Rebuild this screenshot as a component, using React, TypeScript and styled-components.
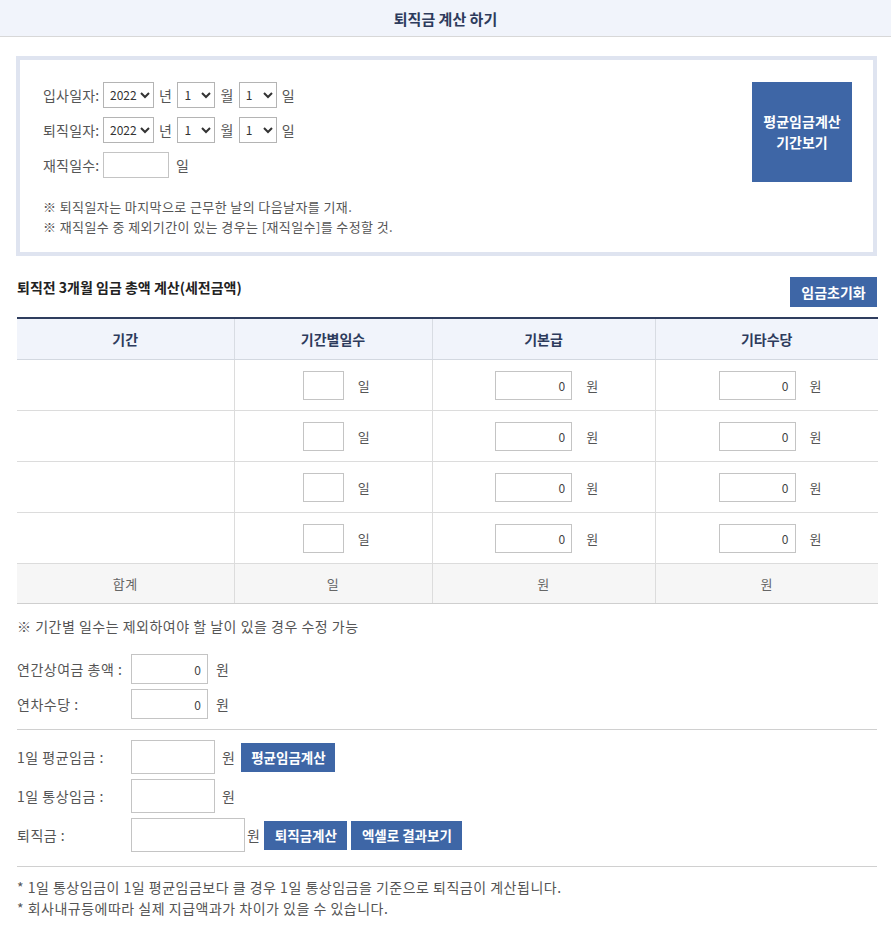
import React from "react";
import styled, { createGlobalStyle } from "styled-components";

const GlobalStyle = createGlobalStyle`
  html, body {
    margin: 0;
    padding: 0;
    background: #fff;
  }
  body {
    font-family: "Noto Sans CJK KR", "Noto Sans", sans-serif;
    font-size: 14px;
    letter-spacing: 0.5px;
    color: #555;
  }
`;

const Header = styled.header`
  height: 36px;
  background: #f1f4fb;
  border-bottom: 1px solid #d8d8d8;
  display: flex;
  align-items: center;
  justify-content: center;
  font-size: 15px;
  font-weight: 700;
  letter-spacing: 0;
  color: #2d3b5c;
`;

const Content = styled.div`
  padding: 19px 14px 0 16px;
`;

const InfoBox = styled.div`
  border: 4px solid #dfe4f0;
  padding: 17px 21px 14px 23px;
  display: flex;
  justify-content: space-between;
  align-items: flex-start;
  height: 200px;
  box-sizing: border-box;
`;

const DateRows = styled.div`
  display: flex;
  flex-direction: column;
`;

const Row = styled.div<{ $gap?: number; $h?: number }>`
  display: flex;
  flex-shrink: 0;
  align-items: center;
  gap: ${(p) => p.$gap ?? 5}px;
  height: ${(p) => p.$h ?? 35}px;
`;

const Label = styled.span<{ $w?: number }>`
  width: ${(p) => (p.$w ? `${p.$w}px` : "auto")};
  flex-shrink: 0;
  color: #555;
  white-space: nowrap;
`;

const DateLabel = styled(Label)`
  letter-spacing: 0.2px;
`;

const Select = styled.select<{ $w: number }>`
  width: ${(p) => p.$w}px;
  height: 26px;
  border: 1px solid #b4b4b4;
  border-radius: 0;
  background: #fff;
  font-family: "Noto Sans CJK KR", "Noto Sans", sans-serif;
  font-size: 12px;
  color: #333;
  padding: 0 0 0 2px;
`;

const TextInput = styled.input<{ $w: number; $h: number }>`
  width: ${(p) => p.$w}px;
  height: ${(p) => p.$h}px;
  box-sizing: border-box;
  flex-shrink: 0;
  border: 1px solid #c4c4c4;
  text-align: right;
  padding: 0 6px;
  font-family: "Noto Sans CJK KR", "Noto Sans", sans-serif;
  font-size: 12px;
  color: #444;
  outline: none;
`;

const Notes = styled.div`
  margin-top: 15px;
  font-size: 13px;
  letter-spacing: 0.4px;
  line-height: 20px;
  color: #555;
`;

const BlueButton = styled.button<{ $w?: number; $h?: number; $fs?: number }>`
  width: ${(p) => (p.$w ? `${p.$w}px` : "auto")};
  height: ${(p) => p.$h ?? 29}px;
  background: #3e66a6;
  color: #fff;
  border: 0;
  padding: 0 6px;
  font-family: "Noto Sans CJK KR", "Noto Sans", sans-serif;
  font-size: ${(p) => p.$fs ?? 13.5}px;
  font-weight: 700;
  letter-spacing: 0;
  line-height: 21px;
  cursor: pointer;
  flex-shrink: 0;
`;

const PeriodButton = styled(BlueButton)`
  margin-top: 5px;
`;

const SectionHead = styled.div`
  margin: 21px 0 10px 1px;
  display: flex;
  justify-content: space-between;
  align-items: center;
`;

const SectionTitle = styled.h2`
  margin: 0;
  font-size: 14px;
  font-weight: 700;
  letter-spacing: 0;
  color: #222;
  position: relative;
  top: -5px;
`;

const Table = styled.table`
  width: 861px;
  margin-left: 1px;
  border-collapse: collapse;
  border-top: 2px solid #2f3d5e;
  table-layout: fixed;
`;

const Th = styled.th`
  height: 40px;
  padding: 0;
  background: #f1f4fb;
  color: #2d3b5c;
  font-size: 14px;
  font-weight: 700;
  letter-spacing: 0;
  border-bottom: 1px solid #d3d8e0;
  border-left: 1px solid #d8dce3;
  &:first-child {
    border-left: 0;
  }
`;

const Td = styled.td`
  height: 50px;
  padding: 0;
  border-bottom: 1px solid #dcdcdc;
  border-left: 1px solid #dcdcdc;
  text-align: center;
  vertical-align: middle;
  &:first-child {
    border-left: 0;
  }
`;

const SumTd = styled.td`
  height: 39px;
  padding: 0;
  background: #f6f6f6;
  border-top: 1px solid #2f3d5e;
  border-bottom: 1px solid #cfcfcf;
  border-left: 1px solid #dcdcdc;
  text-align: center;
  color: #666;
  font-size: 13px;
  &:first-child {
    border-left: 0;
  }
`;

const Cell = styled.div`
  display: flex;
  justify-content: center;
  align-items: center;
  gap: 14px;
  padding-left: 7px;
  font-size: 13px;
`;

const TableNote = styled.p`
  margin: 12px 0 18px 1px;
  color: #555;
`;

const FormBlock = styled.div`
  padding-left: 1px;
  display: flex;
  flex-direction: column;
  gap: 5px;
`;

const Divider = styled.hr<{ $top?: number }>`
  margin: ${(p) => p.$top ?? 10}px 0 10px 1px;
  border: 0;
  border-top: 1px solid #d0d0d0;
`;

const Unit = styled.span<{ $ml: number }>`
  margin-left: ${(p) => p.$ml}px;
  color: #555;
  flex-shrink: 0;
`;

const Footer = styled.div`
  margin: 10px 0 0 1px;
  line-height: 21px;
  color: #555;
`;

const years = ["2022"];
const nums = Array.from({ length: 12 }, (_, i) => String(i + 1));
const days = Array.from({ length: 31 }, (_, i) => String(i + 1));

const DateRow: React.FC<{ label: string }> = ({ label }) => (
  <Row>
    <DateLabel $w={55}>{label}</DateLabel>
    <Select $w={51} defaultValue="2022">
      {years.map((y) => (
        <option key={y}>{y}</option>
      ))}
    </Select>
    <Label>년</Label>
    <Select $w={38} defaultValue="1">
      {nums.map((m) => (
        <option key={m}>{m}</option>
      ))}
    </Select>
    <Label>월</Label>
    <Select $w={38} defaultValue="1">
      {days.map((d) => (
        <option key={d}>{d}</option>
      ))}
    </Select>
    <Label>일</Label>
  </Row>
);

export default function App() {
  const rows = [0, 1, 2, 3];
  return (
    <>
      <GlobalStyle />
      <Header>퇴직금 계산 하기</Header>
      <Content>
        <InfoBox>
          <DateRows>
            <DateRow label="입사일자:" />
            <DateRow label="퇴직일자:" />
            <Row>
              <DateLabel $w={55}>재직일수:</DateLabel>
              <TextInput $w={66} $h={26} />
              <Label style={{ marginLeft: 2 }}>일</Label>
            </Row>
            <Notes>
              ※ 퇴직일자는 마지막으로 근무한 날의 다음날자를 기재.
              <br />※ 재직일수 중 제외기간이 있는 경우는 [재직일수]를 수정할 것.
            </Notes>
          </DateRows>
          <PeriodButton $w={100} $h={100} $fs={14}>
            평균임금계산
            <br />
            기간보기
          </PeriodButton>
        </InfoBox>

        <SectionHead>
          <SectionTitle>퇴직전 3개월 임금 총액 계산(세전금액)</SectionTitle>
          <BlueButton $w={87} $h={30} $fs={14}>
            임금초기화
          </BlueButton>
        </SectionHead>

        <Table>
          <colgroup>
            <col style={{ width: 217 }} />
            <col style={{ width: 198 }} />
            <col style={{ width: 223 }} />
            <col style={{ width: 223 }} />
          </colgroup>
          <thead>
            <tr>
              <Th>기간</Th>
              <Th>기간별일수</Th>
              <Th>기본급</Th>
              <Th>기타수당</Th>
            </tr>
          </thead>
          <tbody>
            {rows.map((r) => (
              <tr key={r}>
                <Td />
                <Td>
                  <Cell>
                    <TextInput $w={41} $h={29} />
                    일
                  </Cell>
                </Td>
                <Td>
                  <Cell>
                    <TextInput $w={77} $h={29} defaultValue="0" />
                    원
                  </Cell>
                </Td>
                <Td>
                  <Cell>
                    <TextInput $w={77} $h={29} defaultValue="0" />
                    원
                  </Cell>
                </Td>
              </tr>
            ))}
            <tr>
              <SumTd>합계</SumTd>
              <SumTd>일</SumTd>
              <SumTd>원</SumTd>
              <SumTd>원</SumTd>
            </tr>
          </tbody>
        </Table>

        <TableNote>※ 기간별 일수는 제외하여야 할 날이 있을 경우 수정 가능</TableNote>

        <FormBlock>
          <Row $h={30} $gap={0}>
            <Label $w={114}>연간상여금 총액 :</Label>
            <TextInput $w={77} $h={30} defaultValue="0" />
            <Unit $ml={8}>원</Unit>
          </Row>
          <Row $h={30} $gap={0}>
            <Label $w={114}>연차수당 :</Label>
            <TextInput $w={77} $h={30} defaultValue="0" />
            <Unit $ml={8}>원</Unit>
          </Row>
        </FormBlock>

        <Divider />

        <FormBlock>
          <Row $h={34} $gap={0}>
            <Label $w={114}>1일 평균임금 :</Label>
            <TextInput $w={84} $h={34} />
            <Unit $ml={7}>원</Unit>
            <BlueButton $w={94} style={{ marginLeft: 6 }}>
              평균임금계산
            </BlueButton>
          </Row>
          <Row $h={34} $gap={0}>
            <Label $w={114}>1일 통상임금 :</Label>
            <TextInput $w={84} $h={34} />
            <Unit $ml={7}>원</Unit>
          </Row>
          <Row $h={34} $gap={0}>
            <Label $w={114}>퇴직금 :</Label>
            <TextInput $w={114} $h={34} />
            <Unit $ml={2}>원</Unit>
            <BlueButton $w={83} style={{ marginLeft: 4 }}>
              퇴직금계산
            </BlueButton>
            <BlueButton $w={111} style={{ marginLeft: 4 }}>
              엑셀로 결과보기
            </BlueButton>
          </Row>
        </FormBlock>

        <Divider $top={14} />

        <Footer>
          * 1일 통상임금이 1일 평균임금보다 클 경우 1일 통상임금을 기준으로 퇴직금이 계산됩니다.
          <br />* 회사내규등에따라 실제 지급액과가 차이가 있을 수 있습니다.
        </Footer>
      </Content>
    </>
  );
}
